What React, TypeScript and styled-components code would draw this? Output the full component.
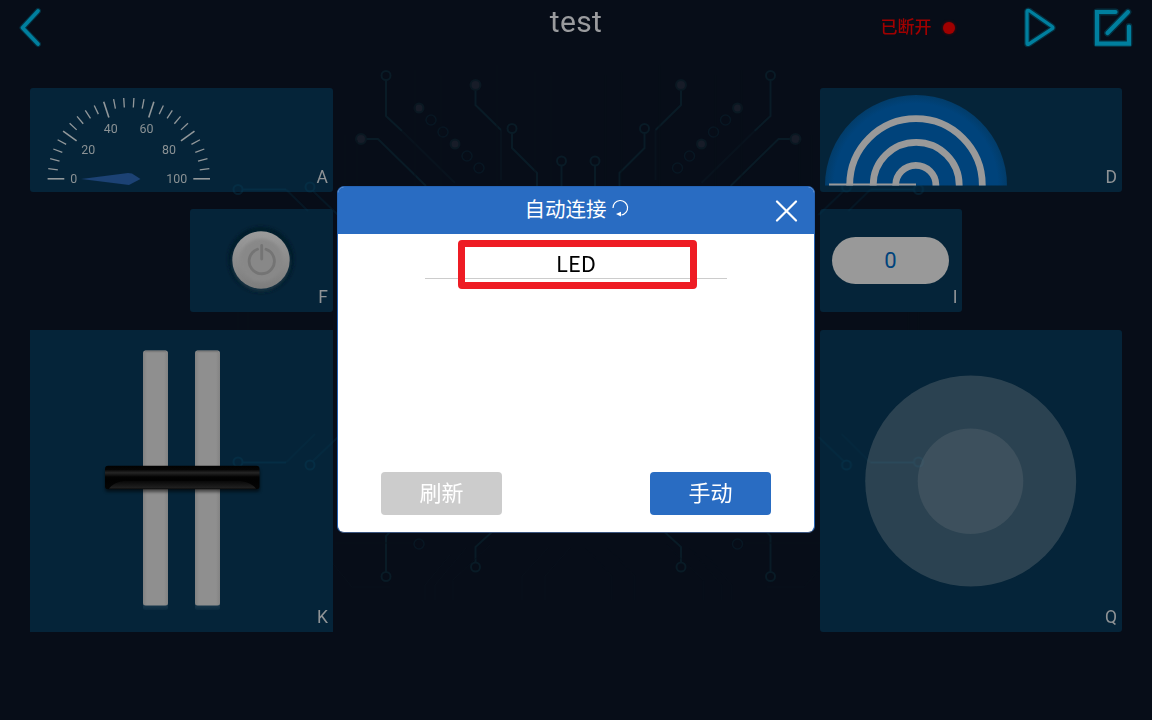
import React from "react";
import styled, { createGlobalStyle } from "styled-components";

const GlobalStyle = createGlobalStyle`
  * { box-sizing: border-box; }
  body { margin: 0; background: #070d18; font-family: Roboto, "Noto Sans CJK SC", sans-serif; }
  svg { display: block; }
`;

const Screen = styled.div`
  position: relative;
  width: 1152px;
  height: 720px;
  overflow: hidden;
  display: flex;
  flex-direction: column;
  background: #070d18;
`;

const Backdrop = styled.svg`
  position: absolute;
  inset: 0;
`;

const Header = styled.header`
  position: relative;
  display: grid;
  grid-template-columns: 1fr auto 1fr;
  height: 88px;
  flex: none;
`;

const Title = styled.h1`
  margin: 0;
  padding-top: 4px;
  font-size: 30px;
  line-height: 36px;
  font-weight: 400;
  letter-spacing: 0.4px;
  color: #9a9b9e;
`;

const HeaderRight = styled.div`
  display: flex;
  justify-content: flex-end;
  align-items: flex-start;
  padding-right: 14px;
`;

const Status = styled.div`
  display: flex;
  align-items: center;
  gap: 11.5px;
  height: 52px;
  margin-right: 63px;
  font: 500 17px/24px "Noto Sans CJK SC", sans-serif;
  color: #a00000;
`;

const StatusDot = styled.i`
  width: 12px;
  height: 12px;
  margin-top: 4px;
  border-radius: 50%;
  background: #a00000;
  box-shadow: 0 0 3px #700000;
`;

const IconButton = styled.button<{ $gap?: number }>`
  border: 0;
  padding: 0;
  margin: 0 0 0 ${(p) => p.$gap ?? 0}px;
  background: none;
  justify-self: start;
  align-self: start;
`;

const Board = styled.main`
  position: relative;
  display: flex;
  justify-content: space-between;
  padding: 0 30.5px 0 30px;
`;

const Side = styled.section<{ $align: "flex-start" | "flex-end" }>`
  display: flex;
  flex-direction: column;
  align-items: ${(p) => p.$align};
  gap: 17.5px;
  width: ${(p) => (p.$align === "flex-end" ? 302.5 : 301.5)}px;
`;

const Widget = styled.article<{ $w?: string; $h: number; $r?: number }>`
  position: relative;
  width: ${(p) => p.$w ?? "100%"};
  height: ${(p) => p.$h}px;
  border-radius: ${(p) => p.$r ?? 3}px;
  background: rgba(3, 59, 90, 0.5);
`;

const WidgetTag = styled.span`
  position: absolute;
  right: 4.5px;
  bottom: 4px;
  font-size: 17.5px;
  line-height: 21px;
  color: #8f9396;
`;

const ValuePill = styled.div`
  display: flex;
  align-items: center;
  justify-content: center;
  width: 117px;
  height: 47px;
  margin: 28px 0 0 12px;
  border-radius: 24px;
  background: #999;
  font-size: 22px;
  color: #00437c;
`;

const WidgetBody = styled.div`
  display: flow-root;
`;

const Dialog = styled.div`
  position: absolute;
  left: 337px;
  top: 186px;
  width: 478px;
  height: 347px;
  display: flex;
  flex-direction: column;
  overflow: hidden;
  border: 1px solid #2562b2;
  border-bottom-color: #3c5680;
  border-radius: 7px;
  background: #fff;
`;

const DialogBar = styled.div`
  display: grid;
  grid-template-columns: 1fr auto 1fr;
  height: 47px;
  flex: none;
  background: #296cc2;
`;

const DialogTitle = styled.h2`
  grid-column: 2;
  display: flex;
  gap: 5px;
  margin: 0;
  padding: 6px 0 0 2px;
  font: 400 20.5px/30px "Noto Sans CJK SC", sans-serif;
  color: #fff;
`;

const CloseButton = styled.button`
  grid-column: 3;
  justify-self: end;
  align-self: start;
  padding: 12px 16px 0 0;
  border: 0;
  background: none;
`;

const DeviceRow = styled.div`
  position: relative;
  align-self: center;
  width: 302px;
  height: 45px;
  border-bottom: 1.5px solid #ccc;
  text-align: center;
  padding-top: 12px;
  font: 400 22px/32px "Noto Sans CJK SC", sans-serif;
  color: #000;
`;

const DeviceName = styled.div`
  height: 32px;
`;

const Highlight = styled.span`
  position: absolute;
  left: 33px;
  top: 6px;
  width: 239px;
  height: 49px;
  border: 7px solid #ee1c24;
  border-radius: 4px;
`;

const DialogActions = styled.div`
  display: flex;
  justify-content: space-between;
  margin-top: auto;
  padding: 0 43px 17px;
`;

const ActionButton = styled.button<{ $primary?: boolean }>`
  width: 121px;
  height: 43px;
  padding: 0 0 5px;
  border: 0;
  border-radius: 4px;
  background: ${(p) => (p.$primary ? "#296cc2" : "#ccc")};
  font: 400 22px/30px "Noto Sans CJK SC", sans-serif;
  color: #fff;
`;

const circuitHalf = (
  <g>
    <g fill="none" stroke="#091b26" strokeWidth="2">
      <circle cx="386" cy="75.500" r="4.500" />
      <path d="M386 80V116L402 131" />
      <path d="M402 131L455 183" opacity="0.400" />
      <path d="M361 139H378L426 186" />
      <path d="M475.500 85V105L501 130" />
      <path d="M501 130V180" opacity="0.400" />
      <circle cx="512" cy="128.500" r="4.500" />
      <path d="M512 133V148L537 173V190" />
      <circle cx="561.500" cy="161" r="4.500" />
      <path d="M561.500 166V187" />
      <circle cx="386" cy="576.500" r="4.500" />
      <path d="M386 572V536L390 532" />
      <circle cx="475.500" cy="567" r="4.500" />
      <path d="M475.500 562V547L492 532" />
    </g>
    <g fill="none" stroke="#081723" strokeWidth="1.500">
      <circle cx="431" cy="120" r="5" />
      <circle cx="443" cy="132" r="5" />
      <circle cx="467" cy="156" r="5" />
      <circle cx="479" cy="168" r="5" />
      <circle cx="419" cy="544" r="5" />
    </g>
    <g fill="#171c28" stroke="#0a1822" strokeWidth="2">
      <circle cx="475.500" cy="85" r="5" />
      <circle cx="419" cy="108" r="4.500" />
      <circle cx="455" cy="144" r="4.500" />
      <circle cx="361" cy="139" r="5" />
    </g>
    <g fill="none" stroke="#073145" strokeWidth="2" opacity="0.500">
      <circle cx="238" cy="189.500" r="4.500" />
      <path d="M243 189.500H286" />
      <path d="M286 189.500L308 211" opacity="0.600" />
      <circle cx="310" cy="187" r="4.500" />
      <path d="M313 191L338 215" opacity="0.600" />
      <circle cx="238" cy="462" r="4.500" />
      <path d="M243 462.500H286" />
      <path d="M286 462.500L315 434" opacity="0.400" />
      <circle cx="310" cy="465" r="4.500" />
      <path d="M313 461L338 437" opacity="0.600" />
    </g>
    <g stroke="#0a121d" opacity="0.700">
      <path d="M345 135V186M357 140V186M415 70V186M441 75V186M497 65V186M535 72V186M551 75V186M238 312V330M248 312V330" />
      <path d="M335 543H412M330 560L352 587H390M425 600V585L450 555M435 600V585L466 548M453 600V580L490 545M522 600V576L548 548M545 600V576L570 548" fill="none" />
    </g>
  </g>
);

function CircuitBackdrop() {
  return (
    <Backdrop width="1152" height="720" viewBox="0 0 1152 720">
      {circuitHalf}
      <g transform="translate(1156.500 0) scale(-1 1)">{circuitHalf}</g>
    </Backdrop>
  );
}

function Gauge() {
  const ticks = Array.from({ length: 26 }, (_, i) => {
    const a = Math.PI - (i * Math.PI) / 25;
    const major = i % 5 === 0;
    const inner = major ? 64.5 : 71.5;
    return (
      <line
        key={i}
        x1={98.8 + Math.cos(a) * 81.2}
        y1={90.8 - Math.sin(a) * 81}
        x2={98.8 + Math.cos(a) * inner}
        y2={90.8 - Math.sin(a) * inner}
        strokeWidth={major ? 1.6 : 1.3}
      />
    );
  });
  return (
    <svg width="200" height="103">
      <g stroke="#92989b">{ticks}</g>
      <path d="M51 91L98 85L102 85.500L110.500 91L99 97L95 96.500Z" fill="#1c4274" />
      <g fill="#8b9295" fontFamily="Roboto, sans-serif" fontSize="12.400" textAnchor="middle">
        <text x="43.800" y="94.500">0</text>
        <text x="58.300" y="66.300">20</text>
        <text x="80.700" y="45.200">40</text>
        <text x="116.500" y="45.200">60</text>
        <text x="139" y="66.300">80</text>
        <text x="146.800" y="94.500">100</text>
      </g>
    </svg>
  );
}

function Radar() {
  return (
    <svg width="200" height="103">
      <defs>
        <radialGradient id="radar" gradientUnits="userSpaceOnUse" cx="96" cy="97.500" r="91">
          <stop offset="0.900" stopColor="#00437b" />
          <stop offset="1" stopColor="#023c69" />
        </radialGradient>
      </defs>
      <path d="M5 97.500A91 90.500 0 0 1 187 97.500Z" fill="url(#radar)" />
      <g fill="none" stroke="#999" strokeWidth="6.800">
        <path d="M29.700 97.500V97A66.300 66.300 0 0 1 162.300 97V97.500" />
        <path d="M53.200 97.500V97A43 42.700 0 0 1 139.200 97V97.500" />
        <path d="M75.700 97.500V97A20.100 19.600 0 0 1 115.900 97V97.500" />
      </g>
      <path d="M9 96.500H96" stroke="#999" strokeWidth="2" />
    </svg>
  );
}

function PowerKnob() {
  return (
    <svg width="142" height="103">
      <defs>
        <linearGradient id="knob" x1="0" y1="0" x2="0" y2="1">
          <stop offset="0" stopColor="#9b9b9b" />
          <stop offset="1" stopColor="#7d7d7d" />
        </linearGradient>
        <filter id="soft" x="-30%" y="-30%" width="160%" height="160%">
          <feGaussianBlur stdDeviation="1.600" />
        </filter>
      </defs>
      <circle cx="71" cy="50.500" r="33" fill="#041a2a" filter="url(#soft)" />
      <circle cx="71" cy="53" r="29.500" fill="#183243" filter="url(#soft)" />
      <circle cx="71" cy="51" r="28.700" fill="url(#knob)" />
      <circle cx="71.300" cy="51.300" r="21.500" fill="#888" filter="url(#soft)" />
      <g fill="none" stroke="#747474" strokeWidth="2.800" strokeLinecap="round">
        <path d="M67.500 40.300A12.600 12.600 0 1 0 76 40.300" />
        <path d="M71.700 36.500V50" />
      </g>
    </svg>
  );
}

function Slider() {
  return (
    <svg width="302" height="302">
      <defs>
        <linearGradient id="handle" x1="0" y1="0" x2="0" y2="1">
          <stop offset="0" stopColor="#020202" />
          <stop offset="0.160" stopColor="#050505" />
          <stop offset="0.300" stopColor="#252525" />
          <stop offset="0.480" stopColor="#030303" />
          <stop offset="0.620" stopColor="#020202" />
          <stop offset="1" stopColor="#050505" />
        </linearGradient>
        <linearGradient id="shine" x1="0" y1="0" x2="0" y2="1">
          <stop offset="0" stopColor="#080808" />
          <stop offset="1" stopColor="#222" />
        </linearGradient>
        <linearGradient id="track" x1="0" x2="1" y1="0" y2="0">
          <stop offset="0" stopColor="#818181" />
          <stop offset="0.160" stopColor="#8f8f8f" />
          <stop offset="0.840" stopColor="#8f8f8f" />
          <stop offset="1" stopColor="#838383" />
        </linearGradient>
        <linearGradient id="reflection" x1="0" x2="0" y1="0" y2="1">
          <stop offset="0.500" stopColor="#1d3c50" />
          <stop offset="1" stopColor="#0b2a3f" />
        </linearGradient>
        <filter id="shade" x="-10%" y="-40%" width="120%" height="180%">
          <feGaussianBlur stdDeviation="1.500" />
        </filter>
      </defs>
      {[113, 165].map((x) => (
        <g key={x}>
          <rect x={x} y="266" width="25" height="14" rx="2" fill="url(#reflection)" />
          <rect x={x} y="20.500" width="25" height="255" rx="2.500" fill="url(#track)" />
          <path d={`M${x + 2} 21.500h21`} stroke="#7c7c7c" strokeWidth="1.500" />
        </g>
      ))}
      <rect x="75" y="139" width="155" height="23" rx="3" fill="#000" opacity="0.500" filter="url(#shade)" />
      <rect x="75" y="135.700" width="154.500" height="23.500" rx="3" fill="url(#handle)" />
      <path d="M79 158.500C84 153 89 151 96 151H208C215 151 221 153 226 158.500Z" fill="url(#shine)" />
    </svg>
  );
}

function Joystick() {
  return (
    <svg width="301" height="302">
      <circle cx="150.700" cy="151" r="105.500" fill="#999" fillOpacity="0.260" />
      <circle cx="150.500" cy="151.300" r="52.800" fill="#999" fillOpacity="0.165" />
    </svg>
  );
}

export default function App() {
  return (
    <Screen>
      <GlobalStyle />
      <CircuitBackdrop />
      <Header>
        <IconButton aria-label="返回">
          <svg width="60" height="56" fill="none" strokeLinecap="round" strokeLinejoin="round">
            <path d="M38 11L22.500 27.700L38 44" stroke="#04465a" strokeWidth="6" opacity="0.600" />
            <path d="M38 11L22.500 27.700L38 44" stroke="#007f9e" strokeWidth="3.800" />
          </svg>
        </IconButton>
        <Title>test</Title>
        <HeaderRight>
          <Status>
            已断开
            <StatusDot />
          </Status>
          <IconButton aria-label="运行">
            <svg width="46" height="56" fill="none" strokeLinejoin="round">
              <path d="M9 11.500V43.500Q9 45 11 44L34.300 28.700Q35.500 27.700 34.300 26.700L11 10.500Q9 10 9 11.500Z" stroke="#04465a" strokeWidth="5.800" opacity="0.600" />
              <path d="M9 11.500V43.500Q9 45 11 44L34.300 28.700Q35.500 27.700 34.300 26.700L11 10.500Q9 10 9 11.500Z" stroke="#007f9e" strokeWidth="3.300" />
            </svg>
          </IconButton>
          <IconButton aria-label="编辑" $gap={24}>
            <svg width="50" height="56" fill="none" strokeLinejoin="miter">
              <path d="M27.500 12H9V43.700H41V26.500M19.500 33L40 12" stroke="#04465a" strokeWidth="6.800" strokeLinecap="round" strokeLinejoin="round" opacity="0.600" />
              <path d="M27.500 12H9V43.700H41V26.500" stroke="#007f9e" strokeWidth="4.200" strokeLinecap="round" />
              <path d="M19.500 33L40 12" stroke="#007f9e" strokeWidth="4.200" strokeLinecap="round" />
            </svg>
          </IconButton>
        </HeaderRight>
      </Header>
      <Board>
        <Side $align="flex-end">
          <Widget $h={103.5}>
            <Gauge />
            <WidgetTag>A</WidgetTag>
          </Widget>
          <Widget $h={103} $w="142.5px">
            <PowerKnob />
            <WidgetTag>F</WidgetTag>
          </Widget>
          <Widget $h={302} $r={0}>
            <Slider />
            <WidgetTag>K</WidgetTag>
          </Widget>
        </Side>
        <Side $align="flex-start">
          <Widget $h={103.5}>
            <Radar />
            <WidgetTag>D</WidgetTag>
          </Widget>
          <Widget $h={103} $w="142px">
            <WidgetBody>
              <ValuePill>0</ValuePill>
            </WidgetBody>
            <WidgetTag>I</WidgetTag>
          </Widget>
          <Widget $h={302}>
            <Joystick />
            <WidgetTag>Q</WidgetTag>
          </Widget>
        </Side>
      </Board>
      <Dialog role="dialog">
        <DialogBar>
          <DialogTitle>
            自动连接
            <svg width="18" height="30" fill="none" stroke="#fff" strokeWidth="1.200">
              <path d="M1 15A7.300 7.300 0 1 1 9.500 22" />
              <path d="M4 21L9 18.700V23.500Z" fill="#fff" stroke="none" />
            </svg>
          </DialogTitle>
          <CloseButton aria-label="关闭">
            <svg width="23" height="23" fill="none" stroke="#fff" strokeWidth="2.200" strokeLinecap="round">
              <path d="M2 2.500L21 21.500M21 2.500L2 21.500" />
            </svg>
          </CloseButton>
        </DialogBar>
        <DeviceRow>
          <DeviceName>LED</DeviceName>
          <Highlight />
        </DeviceRow>
        <DialogActions>
          <ActionButton>刷新</ActionButton>
          <ActionButton $primary>手动</ActionButton>
        </DialogActions>
      </Dialog>
    </Screen>
  );
}
